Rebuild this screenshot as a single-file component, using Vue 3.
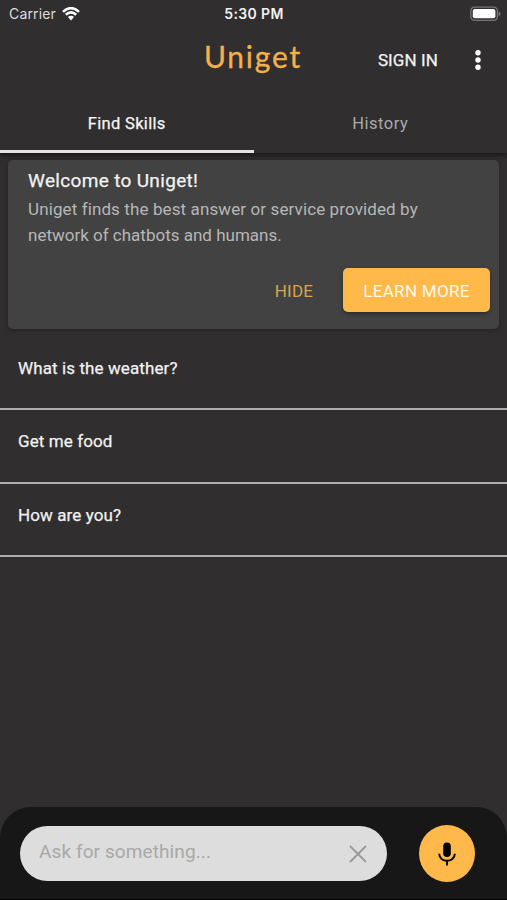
<script setup>
import { ref } from 'vue'

const skills = ['What is the weather?', 'Get me food', 'How are you?']
const query = ref('')
</script>

<template>
  <div class="app">
    <header class="header">
      <div class="status">
        <div class="carrier">
          <span class="carrier-name">Carrier</span>
          <svg class="wifi" viewBox="0 0 18 14" width="18" height="14">
            <path d="M1 4.8Q9-2.6 17 4.8" />
            <path d="M3.8 7.7Q9 3 14.2 7.7" />
            <path class="dot" d="M5.9 10Q9 7.4 12.1 10L9 13.4Z" />
          </svg>
        </div>
        <span class="time">5:30 PM</span>
        <svg class="battery" viewBox="0 0 31 16" width="31" height="16">
          <rect x=".8" y="1.1" width="26.6" height="13.2" rx="3.8" fill="none" stroke="#777" stroke-width="1.3" />
          <rect x="2.8" y="3.1" width="22.6" height="9.2" rx="2" fill="#fff" />
          <path d="M28.7 5.2Q30.5 6 30.5 7.7T28.7 10.2Z" fill="#777" />
        </svg>
      </div>
      <div class="toolbar">
        <span></span>
        <h1 class="logo">Uniget</h1>
        <div class="actions">
          <span class="sign-in">SIGN IN</span>
          <svg class="more" viewBox="0 0 6 20" width="6" height="20">
            <circle cx="3" cy="2.8" r="2.7" /><circle cx="3" cy="10" r="2.7" /><circle cx="3" cy="17.2" r="2.7" />
          </svg>
        </div>
      </div>
      <nav class="tabs">
        <div class="tab active"><span class="tab-find">Find Skills</span></div>
        <div class="tab"><span class="tab-history">History</span></div>
      </nav>
    </header>

    <main class="content">
      <section class="card">
        <h2>Welcome to Uniget!</h2>
        <p><span class="line-one">Uniget finds the best answer or service provided by</span><br><span class="line-two">network of chatbots and humans.</span></p>
        <div class="card-actions">
          <span class="hide">HIDE</span>
          <button class="learn">LEARN MORE</button>
        </div>
      </section>
      <ul class="skills">
        <li v-for="skill in skills" :key="skill">{{ skill }}</li>
      </ul>
    </main>

    <footer class="footer">
      <div class="ask">
        <input v-model="query" placeholder="Ask for something..." />
        <svg viewBox="0 0 18 18" width="18" height="18"><path d="M1 1L17 17M17 1L1 17" /></svg>
      </div>
      <button class="mic">
        <svg viewBox="0 0 18 24" width="18" height="24">
          <rect x="5.2" y=".5" width="7.6" height="14.5" rx="3.8" />
          <path d="M1.2 11.8C1.2 21 16.8 21 16.8 11.8M9 18.6V23.5" fill="none" stroke="#000" stroke-width="1.9" />
        </svg>
      </button>
    </footer>
  </div>
</template>

<style>
body { margin: 0; background: #302e2f; }
</style>

<style scoped>
* { box-sizing: border-box; }
.app { width: 507px; height: 900px; display: flex; flex-direction: column; overflow: hidden; background: #302e2f; color: #f2f2f2; font-family: Roboto, sans-serif; }
h1, h2, p, ul { margin: 0; padding: 0; font-weight: 400; }
button, input { border: 0; padding: 0; font-family: inherit; }
.header { height: 153px; box-shadow: 0 2px 5px rgba(0, 0, 0, .55); }
.status { height: 27px; display: grid; grid-template-columns: 1fr auto 1fr; align-items: center; padding: 0 8px 0 9px; font-family: Inter, sans-serif; }
.carrier { display: flex; align-items: center; gap: 6px; font-size: 14px; letter-spacing: .15px; color: #ddd; }
.wifi { fill: none; stroke: #fff; stroke-width: 2.5; }
.wifi .dot { fill: #fff; stroke: none; }
.time { font-size: 14px; font-weight: 600; letter-spacing: .35px; }
.battery { justify-self: end; margin-right: -2px; }
.toolbar { height: 66px; display: grid; grid-template-columns: 1fr auto 1fr; padding-right: 26px; padding-left: 24px; }
.logo { height: 66px; font: 400 30px/58px Lato, sans-serif; color: #f5b04a; letter-spacing: 1.8px; padding-left: 1px; -webkit-text-stroke: .3px #f5b04a; }
.actions { display: flex; justify-content: flex-end; align-items: center; gap: 37px; }
.sign-in { font-size: 17px; line-height: 66px; letter-spacing: .1px; -webkit-text-stroke: .25px; }
.more { fill: #fff; }
.tabs { display: grid; grid-template-columns: 1fr 1fr; height: 60px; }
.tab { text-align: center; font-size: 16.5px; line-height: 61px; border-bottom: 3px solid transparent; color: #aaa; letter-spacing: .5px; height: 60px; }
.tab.active { color: #f5f5f5; border-color: #e5e3e4; letter-spacing: .32px; -webkit-text-stroke: .25px; }
.content { flex: 1; padding-top: 7px; }
.card { width: 491px; height: 169px; margin: 0 8px; padding: 6px 9px 17px 20px; border-radius: 5px; background: #424242; box-shadow: 0 1px 4px rgba(0, 0, 0, .3); display: flex; flex-direction: column; }
h2 { font-size: 19px; line-height: 30px; letter-spacing: .33px; -webkit-text-stroke: .25px; }
p { font-size: 17px; line-height: 26px; color: #b7b7b7; white-space: nowrap; }
.line-one { letter-spacing: .11px; }
.line-two { letter-spacing: 0; }
.card-actions { display: flex; justify-content: flex-end; align-items: center; gap: 30px; margin-top: auto; }
.hide { color: #dda24c; font-size: 17px; letter-spacing: .15px; padding-top: 2px; }
.learn { width: 147px; height: 44px; border-radius: 5px; background: #ffb84a; color: #fff8ed; font-size: 17px; padding-top: 2px; letter-spacing: .3px; box-shadow: 0 2px 4px rgba(0, 0, 0, .35); }
.skills { list-style: none; margin-top: 8px; }
.skills li { height: 73.3px; padding: 18px 18px 0; border-bottom: 2px solid #adadad; font-size: 17px; line-height: 27px; letter-spacing: .1px; -webkit-text-stroke: .25px; }
.footer { height: 93px; display: flex; align-items: flex-start; gap: 32px; padding: 18px 20px 0; background: #171717; border-radius: 31px 31px 0 0; border-bottom: 1px solid #000; }
.ask { width: 367px; height: 55px; margin-top: 1px; border-radius: 28px; background: #ddd; display: flex; align-items: center; justify-content: space-between; padding: 0 20px 0 19px; }
.ask input { width: 240px; height: 50px; background: transparent; outline: 0; font-size: 19px; letter-spacing: .1px; padding-bottom: 5px; }
.ask input::placeholder { color: #a8a8a8; opacity: 1; }
.ask svg { fill: none; stroke: #999; stroke-width: 1.8; }
.mic { width: 56px; height: 57px; border-radius: 50%; background: #ffb84a; display: grid; place-items: center; }
</style>
